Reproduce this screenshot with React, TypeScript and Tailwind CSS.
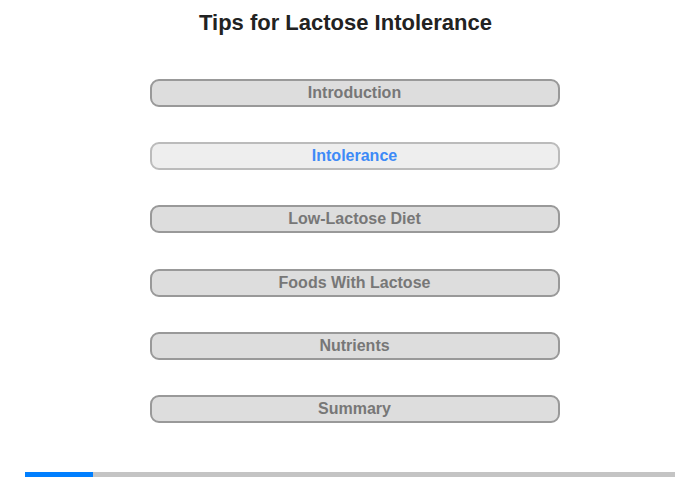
import React, { useState } from 'react';

const sections = [
  'Introduction',
  'Intolerance',
  'Low-Lactose Diet',
  'Foods With Lactose',
  'Nutrients',
  'Summary',
];

const App = () => {
  const [active, setActive] = useState(1);
  const progress = (active / 9.5) * 100;

  return (
    <div className="w-[700px] h-[480px] bg-white flex flex-col font-['Liberation_Sans',Arial,sans-serif]">
      {/* Title */}
      <h1 className="mt-[10px] ml-[-9px] text-center text-[22px] leading-[26px] font-bold text-[#222]">
        Tips for Lactose Intolerance
      </h1>

      {/* Section buttons */}
      <div className="mt-[43px] flex flex-col items-center gap-[35.2px]">
        {sections.map((label, i) => (
          <button
            key={label}
            onClick={() => setActive(i)}
            className={`w-[410px] h-[28px] ml-[9px] rounded-[9px] border-2 text-[16px] leading-none font-bold ${
              i === active
                ? 'bg-[#eeeeee] border-[#bbbbbb] text-[#3d8af7]'
                : 'bg-[#dddddd] border-[#999999] text-[#777777]'
            }`}
          >
            {label}
          </button>
        ))}
      </div>

      {/* Progress bar */}
      <div className="mt-[49px] mx-[25px] h-[5px] bg-[#c4c4c4]">
        <div className="h-full bg-[#007fff]" style={{ width: `${progress}%` }} />
      </div>
    </div>
  );
};

export default App;
